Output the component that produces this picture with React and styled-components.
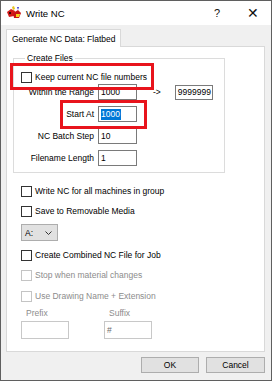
import styled, { createGlobalStyle } from "styled-components";

const GlobalStyle = createGlobalStyle`
  html, body {
    margin: 0;
    padding: 0;
    background: #ffffff;
  }
  * {
    box-sizing: border-box;
  }
`;

const Window = styled.div`
  position: relative;
  width: 272px;
  height: 381px;
  border: 1px solid #5f5f5f;
  background: #f0f0f0;
  font-family: "Liberation Sans", Arial, sans-serif;
  font-size: 8.5px;
  color: #000;
  display: flex;
  flex-direction: column;
`;

const TitleBar = styled.div`
  height: 24px;
  background: #ffffff;
  display: flex;
  align-items: center;
  padding-left: 5px;
  flex-shrink: 0;
`;

const Title = styled.span`
  font-size: 9.6px;
  margin-left: 3px;
  flex: 1;
`;

const TitleButton = styled.span`
  width: ${(p) => p.$w}px;
  text-align: center;
  font-size: ${(p) => p.$size}px;
  color: #111;
`;

const Body = styled.div`
  padding: 4px 6px 0 5px;
  display: flex;
  flex-direction: column;
`;

const TabStrip = styled.div`
  display: flex;
  position: relative;
  z-index: 1;
`;

const Tab = styled.div`
  width: 115px;
  height: 18px;
  border: 1px solid #d9d9d9;
  border-bottom: none;
  background: #ffffff;
  display: flex;
  align-items: center;
  padding-left: 5px;
`;

const Panel = styled.div`
  margin-top: -1px;
  height: 306px;
  background: #ffffff;
  border: 1px solid #d9d9d9;
  padding: 6px 6px 0 6px;
  display: flex;
  flex-direction: column;
`;

const Group = styled.fieldset`
  margin: 0;
  width: 212px;
  height: 120px;
  border: 1px solid #dcdcdc;
  padding: 2px 7px 0 7px;
  display: flex;
  flex-direction: column;
  min-inline-size: 0;
`;

const Legend = styled.legend`
  padding: 0 2px;
  margin-left: 4px;
  line-height: 10px;
`;

const CheckRow = styled.label`
  display: flex;
  align-items: center;
  gap: 3px;
  height: 12px;
  margin-top: ${(p) => p.$top || 0}px;
  color: ${(p) => (p.$disabled ? "#8c8c8c" : "#000")};
`;

const Box = styled.span`
  width: 11px;
  height: 11px;
  border: 1px solid ${(p) => (p.$disabled ? "#c4c4c4" : "#333333")};
  background: #ffffff;
  flex-shrink: 0;
`;

const FieldRows = styled.div`
  display: flex;
  flex-direction: column;
  gap: 6px;
  margin-top: 1px;
`;

const FieldRow = styled.div`
  display: flex;
  align-items: center;
  height: 16px;
`;

const FieldLabel = styled.span`
  width: 77px;
  text-align: right;
  padding-right: 4px;
`;

const Input = styled.div`
  width: ${(p) => p.$w || 39}px;
  height: ${(p) => p.$h || 16}px;
  border: 1px solid ${(p) => (p.$disabled ? "#c8c8c8" : "#7a7a7a")};
  background: #ffffff;
  display: flex;
  align-items: center;
  padding-left: 2px;
  flex-shrink: 0;
  color: ${(p) => (p.$disabled ? "#6d6d6d" : "#000")};
`;

const Selected = styled.span`
  background: #0078d7;
  color: #ffffff;
  padding: 0 1px 0 0;
  line-height: 11px;
`;

const Arrow = styled.span`
  margin: 0 14px 0 16px;
`;

const OptionList = styled.div`
  display: flex;
  flex-direction: column;
  padding-left: 8px;
  margin-top: 12px;
`;

const Select = styled.div`
  margin-top: 7px;
  width: 37px;
  height: 17px;
  background: #e1e1e1;
  border: 1px solid #adadad;
  display: flex;
  align-items: center;
  justify-content: space-between;
  padding: 0 5px 0 3px;
`;

const AffixRow = styled.div`
  display: flex;
  gap: 35px;
  margin-top: 6px;
`;

const Affix = styled.div`
  display: flex;
  flex-direction: column;
  gap: 3px;
  color: #8c8c8c;
`;

const AffixLabel = styled.span`
  padding-left: 5px;
  line-height: 10px;
`;

const Buttons = styled.div`
  display: flex;
  justify-content: flex-end;
  gap: 7px;
  margin-top: 5px;
`;

const Button = styled.div`
  width: ${(p) => p.$w}px;
  height: 16px;
  background: #e1e1e1;
  border: 1px solid #adadad;
  display: flex;
  align-items: center;
  justify-content: center;
`;

const Highlight = styled.div`
  position: absolute;
  left: ${(p) => p.$x}px;
  top: ${(p) => p.$y}px;
  width: ${(p) => p.$w}px;
  height: ${(p) => p.$h}px;
  border: 3px solid #e8141c;
  pointer-events: none;
`;

const AppIcon = () => (
  <svg width="17" height="14" viewBox="0 0 17 14">
    <path d="M1 6 L5 3 L9 5 L8 10 L3 11 Z" fill="#d41a1a" />
    <path d="M7 7 L12 4 L15 7 L13 12 L8 12 Z" fill="#c81414" />
    <path d="M10 8 L14 8 L13 11 L10 11 Z" fill="#f2d21a" />
    <path d="M6 1 L8 0 L9 3 L7 4 Z" fill="#e8c41a" />
    <path d="M11 1 L13 1 L12 4 Z" fill="#3a3ad0" />
    <circle cx="4" cy="7" r="1" fill="#000" />
  </svg>
);

const Chevron = () => (
  <svg width="7" height="4" viewBox="0 0 7 4">
    <path d="M0.5 0.5 L3.5 3.5 L6.5 0.5" fill="none" stroke="#333" strokeWidth="1" />
  </svg>
);

const Check = ({ children, disabled, top }) => (
  <CheckRow $disabled={disabled} $top={top}>
    <Box $disabled={disabled} />
    {children}
  </CheckRow>
);

export default function App() {
  return (
    <>
      <GlobalStyle />
      <Window>
        <TitleBar>
          <AppIcon />
          <Title>Write NC</Title>
          <TitleButton $w={36} $size={11}>?</TitleButton>
          <TitleButton $w={36} $size={14}>✕</TitleButton>
        </TitleBar>
        <Body>
          <TabStrip>
            <Tab>Generate NC Data: Flatbed</Tab>
          </TabStrip>
          <Panel>
            <Group>
              <Legend>Create Files</Legend>
              <Check top={6}>Keep current NC file numbers</Check>
              <FieldRows>
                <FieldRow>
                  <FieldLabel>Within the Range</FieldLabel>
                  <Input>1000</Input>
                  <Arrow>-&gt;</Arrow>
                  <Input $w={38} $h={15}>9999999</Input>
                </FieldRow>
                <FieldRow>
                  <FieldLabel>Start At</FieldLabel>
                  <Input>
                    <Selected>1000</Selected>
                  </Input>
                </FieldRow>
                <FieldRow>
                  <FieldLabel>NC Batch Step</FieldLabel>
                  <Input>10</Input>
                </FieldRow>
                <FieldRow>
                  <FieldLabel>Filename Length</FieldLabel>
                  <Input>1</Input>
                </FieldRow>
              </FieldRows>
            </Group>
            <OptionList>
              <Check>Write NC for all machines in group</Check>
              <Check top={8}>Save to Removable Media</Check>
              <Select>
                <span>A:</span>
                <Chevron />
              </Select>
              <Check top={8}>Create Combined NC File for Job</Check>
              <Check top={8} disabled>
                Stop when material changes
              </Check>
              <Check top={9} disabled>
                Use Drawing Name + Extension
              </Check>
              <AffixRow>
                <Affix>
                  <AffixLabel>Prefix</AffixLabel>
                  <Input $w={48} $h={18} $disabled />
                </Affix>
                <Affix>
                  <AffixLabel>Suffix</AffixLabel>
                  <Input $w={48} $h={18} $disabled>
                    #
                  </Input>
                </Affix>
              </AffixRow>
            </OptionList>
          </Panel>
          <Buttons>
            <Button $w={58}>OK</Button>
            <Button $w={59}>Cancel</Button>
          </Buttons>
        </Body>
        <Highlight $x={9} $y={62} $w={144} $h={27} />
        <Highlight $x={59} $y={99} $w={87} $h={29} />
      </Window>
    </>
  );
}
